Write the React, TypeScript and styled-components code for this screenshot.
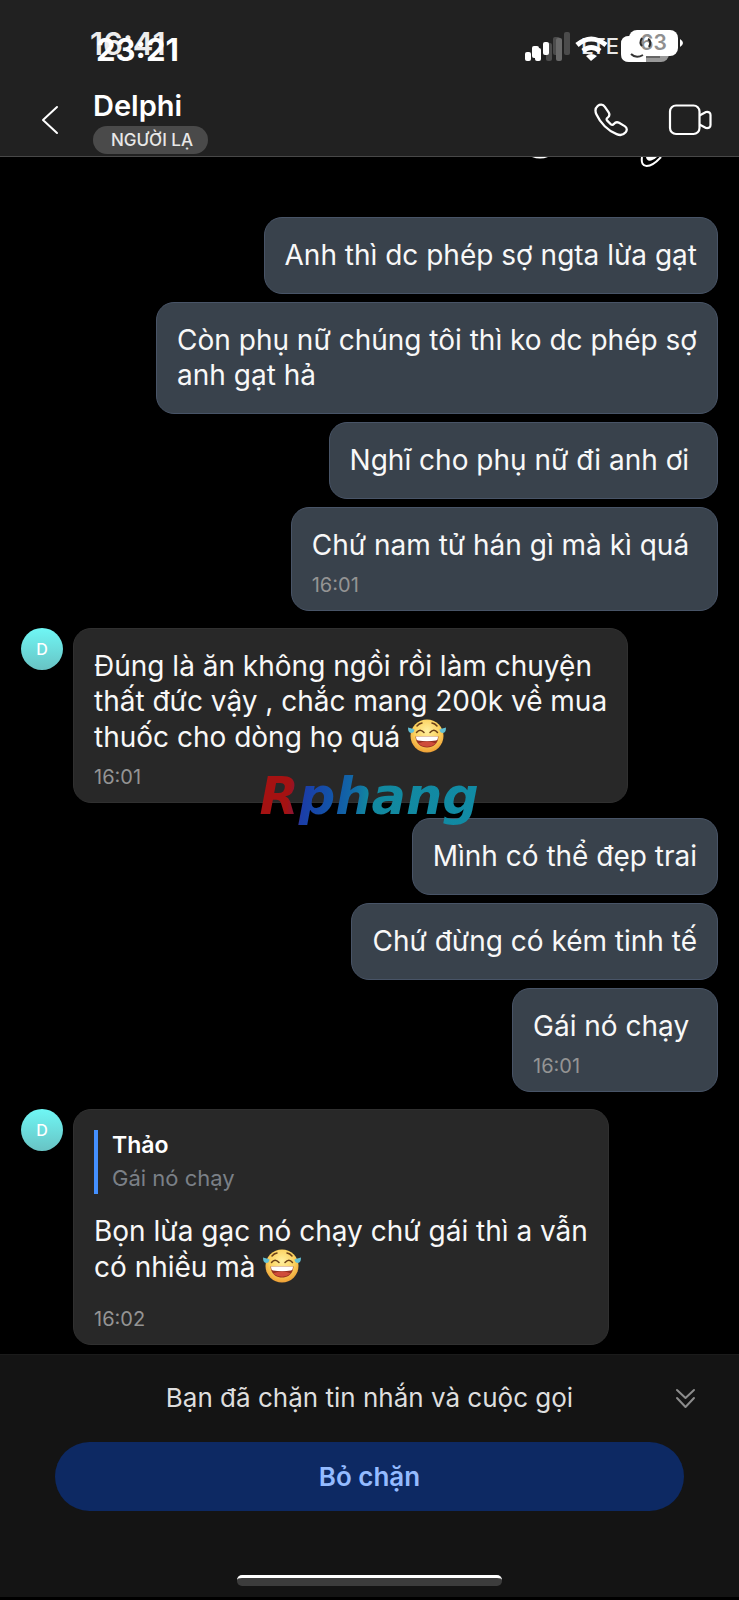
import React from "react";
import styled, { createGlobalStyle, css } from "styled-components";

const GlobalStyle = createGlobalStyle`
  * { box-sizing: border-box; }
  body {
    margin: 0;
    background: #000;
    color: #fff;
    font-family: Inter, "Liberation Sans", sans-serif;
  }
  button { font: inherit; color: inherit; border: 0; padding: 0; background: none; cursor: pointer; }
  svg { display: block; }
`;

const Screen = styled.div`
  min-height: 100vh;
  display: flex;
  flex-direction: column;
  background: #000;
`;

const Header = styled.header`
  background: #212121;
  border-bottom: 1px solid #484848;
`;

const StatusBar = styled.div`
  display: flex;
  justify-content: space-between;
  align-items: flex-start;
  padding: 22px 44px 0 90px;
  height: 86px;
`;

const Clock = styled.div`
  display: grid;
  font-size: 31px;
  line-height: 44px;
`;

const Time = styled.time<{ $front?: boolean }>`
  grid-area: 1 / 1;
  font-weight: ${(p) => (p.$front ? 700 : 600)};
  padding: ${(p) => (p.$front ? "6px 0 0 6px" : "0")};
  color: ${(p) => (p.$front ? "#fff" : "#ececec")};
`;

const NavBar = styled.div`
  display: flex;
  align-items: center;
  padding: 0 27px 2px 36px;
  height: 70px;
`;

const IconButton = styled.button`
  display: flex;
  align-items: center;
  justify-content: center;
`;

const Contact = styled.div`
  flex: 1;
  padding-left: 29px;
  display: flex;
  flex-direction: column;
  align-items: flex-start;
`;

const ContactName = styled.h1`
  margin: 0;
  font-size: 29px;
  line-height: 40px;
  font-weight: 600;
`;

const Badge = styled.span`
  height: 28px;
  padding: 0 15px 0 18px;
  border-radius: 14px;
  background: #4a4a4a;
  color: #e8e8e8;
  font-size: 17px;
  line-height: 28px;
  font-weight: 500;
`;

const Actions = styled.div`
  display: flex;
  align-items: center;
  gap: 40px;
`;

const Thread = styled.main`
  flex: 1;
  position: relative;
  padding: 0 21px 9px;
`;

const Peek = styled.svg`
  margin: 0 40px 44px auto;
`;

const Group = styled.section<{ $sent?: boolean }>`
  display: flex;
  flex-direction: ${(p) => (p.$sent ? "column" : "row")};
  align-items: ${(p) => (p.$sent ? "flex-end" : "flex-start")};
  gap: ${(p) => (p.$sent ? 8 : 10)}px;
  margin-bottom: ${(p) => (p.$sent ? 17 : 15)}px;
  &:last-of-type { margin-bottom: 0; }
`;

const Avatar = styled.div`
  flex: none;
  width: 42px;
  height: 42px;
  border-radius: 50%;
  background: linear-gradient(#6ff7f5, #68c3c4);
  font-size: 16px;
  line-height: 42px;
  font-weight: 500;
  text-align: center;
`;

const Bubble = styled.article<{ $sent?: boolean; $timed?: boolean }>`
  max-width: 84%;
  padding: 20px 20px ${(p) => (p.$timed ? 13 : 20)}px;
  border-radius: 18px;
  border: 1px solid #303030;
  background: #282828;
  ${(p) =>
    p.$sent &&
    css`
      background: #39424c;
      border-color: #485467;
    `}
`;

const Text = styled.p`
  margin: 0;
  font-size: 28px;
  line-height: 35px;
  color: #f8f8f8;
  white-space: break-spaces;
`;

const Stamp = styled.time<{ $loose?: boolean }>`
  display: block;
  margin-top: ${(p) => (p.$loose ? 22 : 10)}px;
  font-size: 20px;
  line-height: 24px;
  color: #949494;
`;

const Quote = styled.blockquote`
  margin: 0 0 20px;
  padding-left: 14px;
  border-left: 4px solid #4490ff;
  font-size: 22px;
  line-height: 31px;
  color: #7b8087;
`;

const QuoteAuthor = styled.cite`
  display: block;
  margin-bottom: 3px;
  font-style: normal;
  font-size: 23px;
  line-height: 30px;
  font-weight: 600;
  color: #fff;
`;

const EmojiIcon = styled.svg`
  display: inline-block;
  vertical-align: -6px;
`;

const Watermark = styled.div`
  position: absolute;
  top: 605px;
  left: 50%;
  margin-left: -110px;
  font-family: "DejaVu Sans", sans-serif;
  font-weight: 700;
  font-style: italic;
  font-size: 51px;
  line-height: 70px;
  color: transparent;
  background: linear-gradient(97deg, #a51212 0 14%, #86153a 18%, #1b3da8 21%, #1255a8 34%, #1268a6 42%, #12889f 50%, #118ba5 100%);
  background-clip: text;
  -webkit-background-clip: text;
  pointer-events: none;
`;

const Footer = styled.footer`
  background: #141414;
  border-top: 1px solid #1b1b1b;
  border-bottom: 3px solid #000;
  padding: 24px 55px 11px;
`;

const Notice = styled.div`
  display: grid;
  grid-template-columns: 24px 1fr 24px;
  align-items: center;
  margin: 0 -14px 25px;
  text-align: center;
  font-size: 26px;
  line-height: 38px;
  color: #dedede;
`;

const Unblock = styled.button`
  display: block;
  width: 100%;
  height: 69px;
  border-radius: 35px;
  background: #0d2963;
  color: #94bbff;
  font-size: 26px;
  font-weight: 600;
`;

const HomeIndicator = styled.div`
  width: 265px;
  height: 11px;
  margin: 64px auto 0;
  border-radius: 5px;
  border-top: 3px solid #fff;
  background: #3c3c3c;
`;

function StatusIcons() {
  return (
    <svg width="170" height="44" viewBox="0 0 170 44" role="img" aria-label="LTE, 63%">
      <rect x="0" y="30" width="6" height="9" rx="2" fill="#fff" />
      <rect x="7" y="24" width="7" height="12" rx="2" fill="#fff" />
      <rect x="10" y="26" width="6" height="13" rx="2" fill="#fff" />
      <rect x="21" y="21" width="6" height="18" rx="2" fill="#4b4b4b" />
      <rect x="18" y="20" width="6" height="13" rx="2" fill="#fff" />
      <rect x="28" y="15" width="7" height="18" rx="2" fill="#4b4b4b" />
      <rect x="31" y="16" width="6" height="23" rx="2" fill="#686868" />
      <rect x="39" y="10" width="6" height="23" rx="2" fill="#4b4b4b" />
      <text x="56" y="32" fill="#e8e8e8" fontSize="22" fontWeight="500">LTE</text>
      <g fill="none" stroke="#fff" strokeWidth="5">
        <path d="M52 23 Q66 11 81 23" />
        <path d="M58 29 Q66 22 75 29" />
      </g>
      <path d="M66 39 L61 34 Q66 30 72 34 Z" fill="#fff" />
      <rect x="96" y="14" width="48" height="26" rx="8" fill="#999" />
      <path d="M104 14 H121 V40 H104 Q96 40 96 32 V22 Q96 14 104 14 Z" fill="#fff" />
      <path d="M121 35 H135" stroke="#333" strokeWidth="1" />
      <rect x="104" y="8" width="49" height="26" rx="8" fill="#fff" />
      <path d="M155 17 Q161 21 155 25 Z" fill="#fff" />
      <path d="M106 32 Q111 37 118 33" fill="none" stroke="#333" strokeWidth="2" />
      <text x="115" y="28" fill="#8f8f8f" fontSize="21" fontWeight="600">63</text>
      <path d="M117 16 Q114 21 117 24 M123 17 Q127 19 124 25" fill="none" stroke="#2a2a2a" strokeWidth="2" />
    </svg>
  );
}

function TearsOfJoy() {
  return (
    <EmojiIcon width="38" height="34" viewBox="0 0 38 34" role="img" aria-label="😂">
      <defs>
        <radialGradient id="face" cx="50%" cy="35%" r="65%">
          <stop offset="0" stopColor="#fff0a0" />
          <stop offset="0.6" stopColor="#fbd05c" />
          <stop offset="1" stopColor="#ee9f35" />
        </radialGradient>
      </defs>
      <circle cx="19" cy="17" r="16.500" fill="url(#face)" />
      <path d="M7.500 17.500 H30.500 C30 25 25 28.500 19 28.500 C13 28.500 8 25 7.500 17.500 Z" fill="#963021" />
      <path d="M8 17.500 H30 Q30 21 28 21.500 Q19 23 10 21.500 Q8 21 8 17.500 Z" fill="#fff" />
      <path d="M10 24.500 Q19 20.500 28 24.500 Q19 31 10 24.500 Z" fill="#cf4c3a" />
      <g fill="none" stroke="#6b4018" strokeWidth="1.500" strokeLinecap="round">
        <path d="M8.500 13.500 Q12 9 16 13.500" />
        <path d="M22 13.500 Q26 9 29.500 13.500" />
        <path d="M9 7 Q11 4.500 14 4" />
        <path d="M24 4 Q27 4.500 29 7" />
      </g>
      <path d="M0 8.500 Q4 9.500 6.500 10.500 Q6 14 3 14 Q0 13.500 0 8.500 Z" fill="#62bfd3" />
      <path d="M38 8.500 Q34 9.500 31.500 10.500 Q32 14 35 14 Q38 13.500 38 8.500 Z" fill="#62bfd3" />
    </EmojiIcon>
  );
}

function BackIcon() {
  return (
    <svg width="28" height="36" viewBox="0 0 28 36" fill="none" stroke="#fff" strokeWidth="2" strokeLinecap="round" strokeLinejoin="round">
      <path d="M21 5 L7 18 L21 31" />
    </svg>
  );
}

function PhoneIcon() {
  return (
    <svg width="34" height="34" viewBox="0 0 36 36" fill="none" stroke="#fff" strokeWidth="2.400" strokeLinejoin="round">
      <path d="M4 3 C6 1.500 9.500 1 11.500 4 L15.500 10 C17 12.500 16.500 14 14.500 15.500 C13 16.500 13 17.500 14 18.700 L17.500 22.300 C19 23.500 20 23.500 21 22.300 C22.500 20.500 24 19.500 26.500 21 L32.500 24.500 C35.500 26.500 35 29 33.500 31 C31 34 27.500 34.500 24 33 C15 29.500 6.500 21 2.500 12 C1 8.500 1 5.500 4 3 Z" />
    </svg>
  );
}

function VideoIcon() {
  return (
    <svg width="44" height="34" viewBox="0 0 44 34" fill="none" stroke="#fff" strokeWidth="2.200" strokeLinejoin="round">
      <rect x="2" y="2.500" width="29.500" height="28.500" rx="6" />
      <path d="M31.500 12.500 L38 9 Q42.500 8.500 42.500 12 V22 Q42.500 25.500 38 25 L31.500 21.500" />
    </svg>
  );
}

function Received({ loose, time, children }: { loose?: boolean; time: string; children: React.ReactNode }) {
  return (
    <Group>
      <Avatar>D</Avatar>
      <Bubble $timed>
        {children}
        <Stamp $loose={loose}>{time}</Stamp>
      </Bubble>
    </Group>
  );
}

function Sent({ text, time }: { text: string; time?: string }) {
  return (
    <Bubble $sent $timed={!!time}>
      <Text>{text}</Text>
      {time && <Stamp>{time}</Stamp>}
    </Bubble>
  );
}

export default function App() {
  return (
    <Screen>
      <GlobalStyle />
      <Header>
        <StatusBar>
          <Clock>
            <Time>16:41</Time>
            <Time $front>23:21</Time>
          </Clock>
          <StatusIcons />
        </StatusBar>
        <NavBar>
          <IconButton aria-label="Quay lại"><BackIcon /></IconButton>
          <Contact>
            <ContactName>Delphi</ContactName>
            <Badge>NGƯỜI LẠ</Badge>
          </Contact>
          <Actions>
            <IconButton aria-label="Gọi thoại"><PhoneIcon /></IconButton>
            <IconButton aria-label="Gọi video"><VideoIcon /></IconButton>
          </Actions>
        </NavBar>
      </Header>

      <Thread>
        <Peek width="150" height="16" viewBox="0 0 150 16">
          <path d="M4 0 Q12 3 20 0 Z" fill="#fff" />
          <path d="M114 0 C112 12 122 12 133 0" fill="none" stroke="#fff" strokeWidth="2" />
          <path d="M118 0 C119 5 123 5 129 0 Z" fill="#fff" />
        </Peek>
        <Group $sent>
          <Sent text="Anh thì dc phép sợ ngta lừa gạt" />
          <Sent text={"Còn phụ nữ chúng tôi thì ko dc phép sợ\nanh gạt hả"} />
          <Sent text="Nghĩ cho phụ nữ đi anh ơi " />
          <Sent text="Chứ nam tử hán gì mà kì quá " time="16:01" />
        </Group>
        <Received time="16:01">
          <Text>
            {"Đúng là ăn không ngồi rồi làm chuyện\nthất đức vậy , chắc mang 200k về mua\nthuốc cho dòng họ quá "}
            <TearsOfJoy />
          </Text>
        </Received>
        <Group $sent>
          <Sent text="Mình có thể đẹp trai" />
          <Sent text="Chứ đừng có kém tinh tế" />
          <Sent text="Gái nó chạy " time="16:01" />
        </Group>
        <Received loose time="16:02">
          <Quote>
            <QuoteAuthor>Thảo</QuoteAuthor>
            Gái nó chạy
          </Quote>
          <Text>
            {"Bọn lừa gạc nó chạy chứ gái thì a vẫn\ncó nhiều mà "}
            <TearsOfJoy />
          </Text>
        </Received>
        <Watermark>Rphang</Watermark>
      </Thread>

      <Footer>
        <Notice>
          <span />
          <span>Bạn đã chặn tin nhắn và cuộc gọi</span>
          <IconButton aria-label="Thu gọn">
            <svg width="22" height="24" viewBox="0 0 22 24" fill="none" stroke="#8c8c8c" strokeWidth="2" strokeLinecap="round" strokeLinejoin="round">
              <path d="M2 4 L10.500 12 L19 4 M2 12 L10.500 21 L19 12" />
            </svg>
          </IconButton>
        </Notice>
        <Unblock>Bỏ chặn</Unblock>
        <HomeIndicator />
      </Footer>
    </Screen>
  );
}
